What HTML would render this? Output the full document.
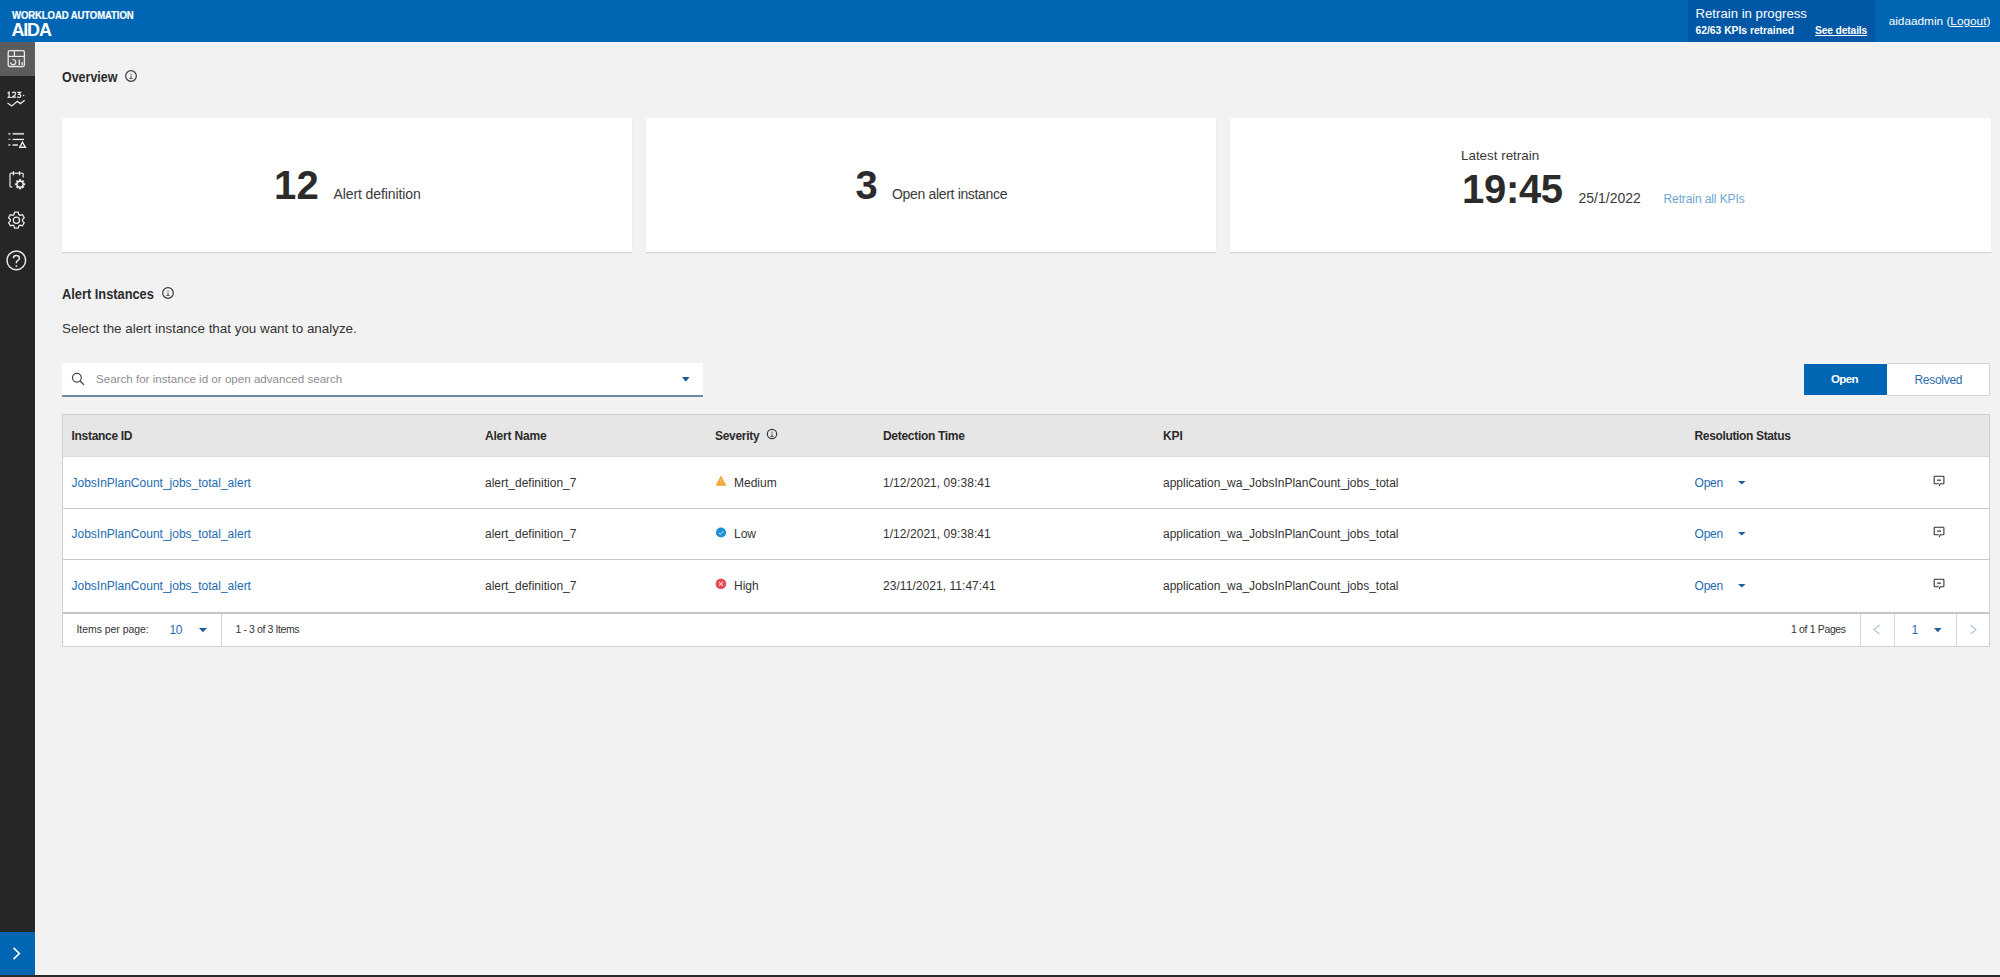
<!DOCTYPE html>
<html><head><meta charset="utf-8">
<style>
*{box-sizing:border-box;margin:0;padding:0}
html,body{width:2000px;height:977px;overflow:hidden;background:#f2f2f2;font-family:"Liberation Sans",sans-serif;color:#333;position:relative}
.abs{position:absolute}
.t{position:absolute;white-space:nowrap;line-height:1}
svg{overflow:visible}
</style></head><body>
<div class="abs" style="left:0px;top:0px;width:2000px;height:42px;background:#0066b3;"></div>
<div class="t" style="left:11.5px;top:9.93px;font-size:10.6px;font-weight:700;color:#fff;letter-spacing:-0.1px;-webkit-text-stroke:0.2px #fff;transform:scaleX(0.9);transform-origin:0 0;">WORKLOAD AUTOMATION</div>
<div class="t" style="left:11.5px;top:20.96px;font-size:18px;font-weight:700;color:#fff;letter-spacing:-1.2px;">AIDA</div>
<div class="abs" style="left:1687.5px;top:0px;width:187.5px;height:42px;background:#0057a5;"></div>
<div class="t" style="left:1695.5px;top:6.63px;font-size:13.2px;color:#fff;">Retrain in progress</div>
<div class="t" style="left:1695.5px;top:25.88px;font-size:10.3px;font-weight:700;color:#fff;">62/63 KPIs retrained</div>
<div class="t" style="left:1815px;top:25.88px;font-size:10.3px;font-weight:700;color:#fff;letter-spacing:-0.15px;text-decoration:underline;">See details</div>
<div class="t" style="left:1888.7px;top:15.81px;font-size:11.8px;color:#fff;">aidaadmin (<u>Logout</u>)</div>
<div class="abs" style="left:0px;top:42px;width:35px;height:933px;background:#262626;"></div>
<div class="abs" style="left:0px;top:42px;width:35px;height:34px;background:#5c5c5c;"></div>
<div class="abs" style="left:0px;top:932px;width:35px;height:43px;background:#0066b3;"></div>
<div class="abs" style="left:0px;top:975px;width:2000px;height:2px;background:#2b2b2b;"></div>
<svg class="abs" style="left:0;top:42px" width="35" height="34" viewBox="0 42 35 34">
<rect x="8.2" y="50.7" width="16.2" height="15.8" rx="1.5" stroke="#e8e8e8" fill="none" stroke-width="1.3"/>
<line x1="8.2" y1="56.4" x2="24.4" y2="56.4" stroke="#e8e8e8" fill="none" stroke-width="1.2"/>
<line x1="14.4" y1="50.7" x2="14.4" y2="56.4" stroke="#e8e8e8" fill="none" stroke-width="1.2"/>
<path d="M12.6 59.6 A2.6 2.6 0 1 1 10.6 62.6" stroke="#e8e8e8" fill="none" stroke-width="1.3"/>
<line x1="19.3" y1="59.4" x2="19.3" y2="65" stroke="#e8e8e8" fill="none" stroke-width="1.3"/>
<rect x="21.5" y="62" width="1.4" height="3" fill="#e8e8e8"/>
</svg>
<svg class="abs" style="left:0;top:84px" width="35" height="30" viewBox="0 84 35 30">
<path d="M7.6 93.3 L9.1 92.2 L9.1 97.3 M7.5 97.3 L10.7 97.3 M12.2 93.3 Q12.6 92.2 14 92.2 Q15.6 92.2 15.6 93.7 Q15.6 94.7 14.4 95.5 L12.3 97.2 L15.9 97.2 M17.3 92.3 L20.5 92.3 L18.7 94.4 Q20.8 94.3 20.8 95.9 Q20.8 97.4 18.9 97.4 Q17.7 97.4 17.2 96.7" stroke="#ececec" fill="none" stroke-width="1.25"/>
<circle cx="23.6" cy="95.5" r="0.8" fill="#e8e8e8"/>
<polyline points="7.5,103 11.8,106 17.3,101.3 20.4,103.6 24.7,100.3" stroke="#e8e8e8" fill="none" stroke-width="1.3"/>
</svg>
<svg class="abs" style="left:0;top:126px" width="35" height="30" viewBox="0 126 35 30">
<rect x="8.4" y="132.9" width="2" height="1.8" fill="#bdbdbd"/>
<rect x="12.6" y="132.9" width="11.4" height="1.8" fill="#c8c8c8"/>
<rect x="8.4" y="138.8" width="2" height="1.2" fill="#bdbdbd"/>
<rect x="12.6" y="138.8" width="11.4" height="1.3" fill="#f0f0f0"/>
<rect x="8.4" y="144.1" width="2" height="1.8" fill="#bdbdbd"/>
<rect x="12.6" y="144.1" width="5.4" height="1.8" fill="#c8c8c8"/>
<path d="M22.5 142.2 L19.7 147.3 L25.4 147.3 Z" stroke="#e8e8e8" fill="none" stroke-width="1.4" stroke-linejoin="miter"/>
</svg>
<svg class="abs" style="left:0;top:165px" width="35" height="30" viewBox="0 165 35 30">
<path d="M12.4 187 L10.9 187 Q10 187 10 186 L10 174.3 Q10 173.3 11 173.3 L22.2 173.3 Q23.2 173.3 23.2 174.3 L23.2 177.5" stroke="#c4c4c4" fill="none" stroke-width="1.5"/>
<line x1="13.4" y1="171.3" x2="13.4" y2="175.3" stroke="#f0f0f0" stroke-width="1.3"/>
<line x1="19.5" y1="171.3" x2="19.5" y2="175.3" stroke="#f0f0f0" stroke-width="1.3"/>
<g transform="translate(20.1 184.2)">
<path d="M-1.05 -3.44 L-0.82 -4.93 L0.82 -4.93 L1.05 -3.44 L1.69 -3.18 L2.91 -4.07 L4.07 -2.91 L3.18 -1.69 L3.44 -1.05 L4.93 -0.82 L4.93 0.82 L3.44 1.05 L3.18 1.69 L4.07 2.91 L2.91 4.07 L1.69 3.18 L1.05 3.44 L0.82 4.93 L-0.82 4.93 L-1.05 3.44 L-1.69 3.18 L-2.91 4.07 L-4.07 2.91 L-3.18 1.69 L-3.44 1.05 L-4.93 0.82 L-4.93 -0.82 L-3.44 -1.05 L-3.18 -1.69 L-4.07 -2.91 L-2.91 -4.07 L-1.69 -3.18 Z" fill="#f0f0f0" stroke="#f0f0f0" stroke-width="0.3" stroke-linejoin="round"/>
<circle r="2.3" fill="#262626"/>
</g>
</svg>
<svg class="abs" style="left:0;top:205px" width="35" height="30" viewBox="0 205 35 30">
<path d="M14.00 214.59 L14.57 212.21 L18.23 212.21 L18.80 214.59 L20.05 215.32 L22.41 214.62 L24.24 217.79 L22.46 219.48 L22.46 220.92 L24.24 222.61 L22.41 225.78 L20.05 225.08 L18.80 225.81 L18.23 228.19 L14.57 228.19 L14.00 225.81 L12.75 225.08 L10.39 225.78 L8.56 222.61 L10.34 220.92 L10.34 219.48 L8.56 217.79 L10.39 214.62 L12.75 215.32 Z" stroke="#e8e8e8" fill="none" stroke-width="1.3" stroke-linejoin="round"/>
<circle cx="16.4" cy="220.2" r="3.1" stroke="#e8e8e8" fill="none" stroke-width="1.3"/>
</svg>
<svg class="abs" style="left:0;top:245px" width="35" height="30" viewBox="0 245 35 30">
<circle cx="16.3" cy="260.4" r="9.3" stroke="#e8e8e8" fill="none" stroke-width="1.5"/>
<path d="M13.4 258.2 Q13.4 255.6 16.3 255.6 Q19.4 255.6 19.4 258.2 Q19.4 259.8 17.6 260.6 Q16.4 261.2 16.4 262.4 L16.4 263.2" stroke="#e8e8e8" fill="none" stroke-width="1.5"/>
<rect x="15.6" y="265.3" width="1.6" height="1.6" fill="#e8e8e8"/>
</svg>
<svg class="abs" style="left:0;top:932px" width="35" height="43" viewBox="0 932 35 43">
<polyline points="13.6,947.9 19.3,953.5 13.6,959.1" stroke="#fff" fill="none" stroke-width="1.6"/>
</svg>
<div class="t" style="left:62px;top:69.95px;font-size:14px;font-weight:700;color:#2b2b2b;transform:scaleX(0.89);transform-origin:0 0;">Overview</div>
<svg class="abs" style="left:123.19999999999999px;top:67.7px" width="16" height="16" viewBox="-8 -8 16 16">
<circle r="5.35" stroke="#3d3d3d" fill="none" stroke-width="1.2"/>
<circle cx="0" cy="-1.9" r="0.7" fill="#3d3d3d"/>
<rect x="-0.5" y="-0.4" width="1" height="2.6" fill="#3d3d3d"/>
<rect x="-1.7" y="2.2" width="3.4" height="0.8" fill="#3d3d3d"/>
</svg>
<div class="abs" style="left:62px;top:118px;width:570px;height:134px;background:#fff;box-shadow:0 1px 1px rgba(0,0,0,.12);"></div>
<div class="abs" style="left:646px;top:118px;width:570px;height:134px;background:#fff;box-shadow:0 1px 1px rgba(0,0,0,.12);"></div>
<div class="abs" style="left:1230px;top:118px;width:760.5px;height:134px;background:#fff;box-shadow:0 1px 1px rgba(0,0,0,.12);"></div>
<div class="t" style="left:274px;top:165.24px;font-size:40px;font-weight:700;color:#2b2b2b;letter-spacing:0.3px;">12</div>
<div class="t" style="left:333.5px;top:187.05px;font-size:14px;color:#3a3a3a;letter-spacing:-0.1px;">Alert definition</div>
<div class="t" style="left:855.5px;top:165.24px;font-size:40px;font-weight:700;color:#2b2b2b;">3</div>
<div class="t" style="left:892px;top:187.05px;font-size:14px;color:#3a3a3a;letter-spacing:-0.33px;">Open alert instance</div>
<div class="t" style="left:1461px;top:149.06px;font-size:13.4px;color:#3a3a3a;">Latest retrain</div>
<div class="t" style="left:1462px;top:168.94px;font-size:40px;font-weight:700;color:#2b2b2b;letter-spacing:-0.3px;">19:45</div>
<div class="t" style="left:1578.5px;top:190.95px;font-size:14px;color:#3a3a3a;">25/1/2022</div>
<div class="t" style="left:1663.5px;top:192.64px;font-size:12px;color:#6ea6d6;letter-spacing:-0.1px;">Retrain all KPIs</div>
<div class="t" style="left:62px;top:287.05px;font-size:14px;font-weight:700;color:#2b2b2b;transform:scaleX(0.915);transform-origin:0 0;">Alert Instances</div>
<svg class="abs" style="left:160px;top:284.9px" width="16" height="16" viewBox="-8 -8 16 16">
<circle r="5.35" stroke="#3d3d3d" fill="none" stroke-width="1.2"/>
<circle cx="0" cy="-1.9" r="0.7" fill="#3d3d3d"/>
<rect x="-0.5" y="-0.4" width="1" height="2.6" fill="#3d3d3d"/>
<rect x="-1.7" y="2.2" width="3.4" height="0.8" fill="#3d3d3d"/>
</svg>
<div class="t" style="left:62px;top:321.66px;font-size:13.4px;color:#333;">Select the alert instance that you want to analyze.</div>
<div class="abs" style="left:62px;top:363px;width:641px;height:34px;background:#fff;border-bottom:2px solid #6a8ba8;"></div>
<svg class="abs" style="left:66px;top:367px" width="24" height="24" viewBox="66 367 24 24">
<circle cx="76.9" cy="377.8" r="4.4" stroke="#444" fill="none" stroke-width="1.2"/>
<line x1="80.1" y1="381" x2="84" y2="384.9" stroke="#444" stroke-width="1.3"/>
</svg>
<div class="t" style="left:96px;top:373.18px;font-size:11.6px;color:#8d8d8d;">Search for instance id or open advanced search</div>
<svg class="abs" style="left:681.6px;top:377px" width="7.6" height="4.8" viewBox="0 0 7.6 4.8"><path d="M0 0 L7.6 0 L3.8 4.8 Z" fill="#1d5e9a"/></svg>
<div class="abs" style="left:1804px;top:364px;width:83px;height:31px;background:#0066b3;"></div>
<div class="t" style="left:1831px;top:374.27px;font-size:11.5px;font-weight:700;color:#fff;letter-spacing:-0.6px;">Open</div>
<div class="abs" style="left:1887px;top:363px;width:103px;height:33px;background:#fff;border:1px solid #d4d4d4;border-left:none;"></div>
<div class="t" style="left:1914.5px;top:373.84px;font-size:12px;color:#2a6cae;letter-spacing:-0.3px;">Resolved</div>
<div class="abs" style="left:62px;top:414px;width:1928px;height:233px;background:#fff;border:1px solid #d0d0d0;"></div>
<div class="abs" style="left:63px;top:415px;width:1926px;height:42px;background:#e6e6e6;"></div>
<div class="abs" style="left:63px;top:456px;width:1926px;height:1px;background:#dadada;"></div>
<div class="abs" style="left:63px;top:508px;width:1926px;height:1px;background:#c9c9c9;"></div>
<div class="abs" style="left:63px;top:559px;width:1926px;height:1px;background:#c9c9c9;"></div>
<div class="abs" style="left:63px;top:612px;width:1926px;height:2px;background:#c6c6c6;"></div>
<div class="t" style="left:71.5px;top:430.14px;font-size:12px;font-weight:700;color:#2b2b2b;letter-spacing:-0.3px;">Instance ID</div>
<div class="t" style="left:485px;top:430.14px;font-size:12px;font-weight:700;color:#2b2b2b;letter-spacing:-0.2px;">Alert Name</div>
<div class="t" style="left:715px;top:430.14px;font-size:12px;font-weight:700;color:#2b2b2b;letter-spacing:-0.3px;">Severity</div>
<div class="t" style="left:883px;top:430.14px;font-size:12px;font-weight:700;color:#2b2b2b;letter-spacing:-0.3px;">Detection Time</div>
<div class="t" style="left:1163px;top:430.14px;font-size:12px;font-weight:700;color:#2b2b2b;letter-spacing:-0.1px;">KPI</div>
<div class="t" style="left:1694.5px;top:430.14px;font-size:12px;font-weight:700;color:#2b2b2b;letter-spacing:-0.35px;">Resolution Status</div>
<svg class="abs" style="left:763.9px;top:425.8px" width="16" height="16" viewBox="-8 -8 16 16">
<circle r="4.7" stroke="#3d3d3d" fill="none" stroke-width="1.2"/>
<circle cx="0" cy="-1.9" r="0.7" fill="#3d3d3d"/>
<rect x="-0.5" y="-0.4" width="1" height="2.6" fill="#3d3d3d"/>
<rect x="-1.7" y="2.2" width="3.4" height="0.8" fill="#3d3d3d"/>
</svg>
<div class="t" style="left:71.5px;top:476.64px;font-size:12px;color:#1d6cb0;">JobsInPlanCount_jobs_total_alert</div>
<div class="t" style="left:485px;top:476.64px;font-size:12px;color:#333;">alert_definition_7</div>
<div class="t" style="left:734px;top:476.64px;font-size:12px;color:#333;">Medium</div>
<div class="t" style="left:883px;top:476.64px;font-size:12px;color:#333;letter-spacing:0.05px;">1/12/2021, 09:38:41</div>
<div class="t" style="left:1163px;top:476.64px;font-size:12px;color:#333;">application_wa_JobsInPlanCount_jobs_total</div>
<div class="t" style="left:1694.5px;top:476.64px;font-size:12px;color:#1d6cb0;letter-spacing:-0.2px;">Open</div>
<svg class="abs" style="left:1738.3px;top:480.5px" width="7.6" height="3.6" viewBox="0 0 7.6 3.6"><path d="M0 0 L7.6 0 L3.8 3.6 Z" fill="#1d5e9a"/></svg>
<svg class="abs" style="left:1930px;top:472.8px" width="18" height="16" viewBox="1930 472.8 18 16">
<path d="M1936.2 483.5 L1935 483.5 Q1934.2 483.5 1934.2 482.7 L1934.2 476.90000000000003 Q1934.2 476.1 1935 476.1 L1943.1 476.1 Q1943.9 476.1 1943.9 476.90000000000003 L1943.9 482.7 Q1943.9 483.5 1943.1 483.5 L1940.2 483.5 L1939.2 485.8 M1938.8 483.5 L1936.2 483.5" stroke="#333" fill="none" stroke-width="1.1"/>
<rect x="1937.1" y="479.3" width="3.9" height="1.3" rx="0.6" fill="#333"/>
</svg>
<div class="t" style="left:71.5px;top:527.84px;font-size:12px;color:#1d6cb0;">JobsInPlanCount_jobs_total_alert</div>
<div class="t" style="left:485px;top:527.84px;font-size:12px;color:#333;">alert_definition_7</div>
<div class="t" style="left:734px;top:527.84px;font-size:12px;color:#333;">Low</div>
<div class="t" style="left:883px;top:527.84px;font-size:12px;color:#333;letter-spacing:0.05px;">1/12/2021, 09:38:41</div>
<div class="t" style="left:1163px;top:527.84px;font-size:12px;color:#333;">application_wa_JobsInPlanCount_jobs_total</div>
<div class="t" style="left:1694.5px;top:527.84px;font-size:12px;color:#1d6cb0;letter-spacing:-0.2px;">Open</div>
<svg class="abs" style="left:1738.3px;top:531.7px" width="7.6" height="3.6" viewBox="0 0 7.6 3.6"><path d="M0 0 L7.6 0 L3.8 3.6 Z" fill="#1d5e9a"/></svg>
<svg class="abs" style="left:1930px;top:524px" width="18" height="16" viewBox="1930 524 18 16">
<path d="M1936.2 534.7 L1935 534.7 Q1934.2 534.7 1934.2 533.9 L1934.2 528.1 Q1934.2 527.3 1935 527.3 L1943.1 527.3 Q1943.9 527.3 1943.9 528.1 L1943.9 533.9 Q1943.9 534.7 1943.1 534.7 L1940.2 534.7 L1939.2 537 M1938.8 534.7 L1936.2 534.7" stroke="#333" fill="none" stroke-width="1.1"/>
<rect x="1937.1" y="530.5" width="3.9" height="1.3" rx="0.6" fill="#333"/>
</svg>
<div class="t" style="left:71.5px;top:579.64px;font-size:12px;color:#1d6cb0;">JobsInPlanCount_jobs_total_alert</div>
<div class="t" style="left:485px;top:579.64px;font-size:12px;color:#333;">alert_definition_7</div>
<div class="t" style="left:734px;top:579.64px;font-size:12px;color:#333;">High</div>
<div class="t" style="left:883px;top:579.64px;font-size:12px;color:#333;letter-spacing:0.05px;">23/11/2021, 11:47:41</div>
<div class="t" style="left:1163px;top:579.64px;font-size:12px;color:#333;">application_wa_JobsInPlanCount_jobs_total</div>
<div class="t" style="left:1694.5px;top:579.64px;font-size:12px;color:#1d6cb0;letter-spacing:-0.2px;">Open</div>
<svg class="abs" style="left:1738.3px;top:583.5px" width="7.6" height="3.6" viewBox="0 0 7.6 3.6"><path d="M0 0 L7.6 0 L3.8 3.6 Z" fill="#1d5e9a"/></svg>
<svg class="abs" style="left:1930px;top:575.8px" width="18" height="16" viewBox="1930 575.8 18 16">
<path d="M1936.2 586.5 L1935 586.5 Q1934.2 586.5 1934.2 585.6999999999999 L1934.2 579.9 Q1934.2 579.0999999999999 1935 579.0999999999999 L1943.1 579.0999999999999 Q1943.9 579.0999999999999 1943.9 579.9 L1943.9 585.6999999999999 Q1943.9 586.5 1943.1 586.5 L1940.2 586.5 L1939.2 588.8 M1938.8 586.5 L1936.2 586.5" stroke="#333" fill="none" stroke-width="1.1"/>
<rect x="1937.1" y="582.3" width="3.9" height="1.3" rx="0.6" fill="#333"/>
</svg>
<svg class="abs" style="left:714px;top:474px" width="14" height="13" viewBox="714 474 14 13"><path d="M720.95 476 L725.9 485.4 L716 485.4 Z" fill="#f4a535" stroke="#f4a535" stroke-width="0.6" stroke-linejoin="round"/><rect x="720.5" y="479" width="0.9" height="3.6" fill="#fbd08a"/><rect x="720.5" y="483.3" width="0.9" height="0.9" fill="#fbd08a"/></svg>
<svg class="abs" style="left:714px;top:525px" width="14" height="14" viewBox="714 525 14 14"><circle cx="721" cy="532.5" r="5.1" fill="#1e90d6"/><polyline points="718.7,532.8 720.4,534.3 723.4,531" stroke="#bfe6ff" fill="none" stroke-width="1"/></svg>
<svg class="abs" style="left:714px;top:577px" width="14" height="14" viewBox="714 577 14 14"><circle cx="720.9" cy="583.8" r="5.3" fill="#e5474f"/><path d="M718.9 581.8 L722.9 585.8 M722.9 581.8 L718.9 585.8" stroke="#ffd6d8" stroke-width="1.1"/></svg>
<div class="t" style="left:76.5px;top:624.31px;font-size:10.5px;color:#333;letter-spacing:-0.05px;">Items per page:</div>
<div class="t" style="left:169.5px;top:624.04px;font-size:12px;color:#1d6cb0;letter-spacing:-0.3px;">10</div>
<svg class="abs" style="left:198.5px;top:627.7px" width="8" height="4.2" viewBox="0 0 8 4.2"><path d="M0 0 L8 0 L4.0 4.2 Z" fill="#1d5e9a"/></svg>
<div class="abs" style="left:221px;top:614px;width:1px;height:32px;background:#d6d6d6;"></div>
<div class="t" style="left:235.5px;top:624.31px;font-size:10.5px;color:#333;letter-spacing:-0.4px;">1 - 3 of 3 Items</div>
<div class="t" style="left:1791px;top:624.31px;font-size:10.5px;color:#333;letter-spacing:-0.35px;">1 of 1 Pages</div>
<div class="abs" style="left:1860px;top:614px;width:1px;height:32px;background:#d6d6d6;"></div>
<div class="abs" style="left:1894px;top:614px;width:1px;height:32px;background:#d6d6d6;"></div>
<div class="abs" style="left:1956px;top:614px;width:1px;height:32px;background:#d6d6d6;"></div>
<svg class="abs" style="left:1870px;top:622px" width="14" height="16" viewBox="1870 622 14 16"><polyline points="1879.5,625 1874,629.6 1879.5,634.2" stroke="#a9bfd4" fill="none" stroke-width="1.1"/></svg>
<div class="t" style="left:1911.5px;top:624.04px;font-size:12px;color:#1d6cb0;">1</div>
<svg class="abs" style="left:1933.8px;top:627.7px" width="7.6" height="4.2" viewBox="0 0 7.6 4.2"><path d="M0 0 L7.6 0 L3.8 4.2 Z" fill="#1d5e9a"/></svg>
<svg class="abs" style="left:1966px;top:622px" width="14" height="16" viewBox="1966 622 14 16"><polyline points="1970.5,625 1976,629.6 1970.5,634.2" stroke="#a9bfd4" fill="none" stroke-width="1.1"/></svg>
</body></html>
